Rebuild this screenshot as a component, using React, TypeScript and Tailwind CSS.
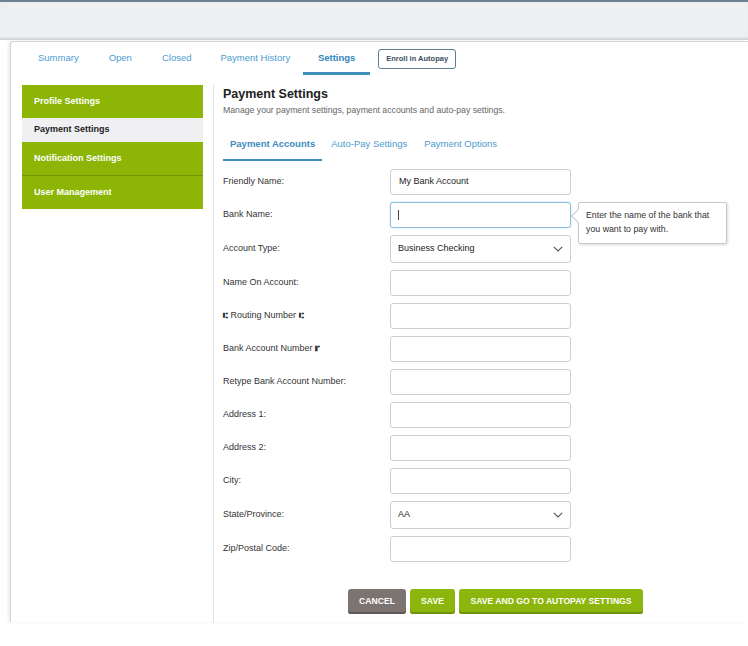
import React from "react";

const font = { fontFamily: '"Liberation Sans", Arial, sans-serif' };

const TopTab: React.FC<{ label: string; active?: boolean; className?: string }> = ({
  label,
  active,
  className,
}) => (
  <div
    className={`flex h-full items-center ${active ? "justify-center border-b-[3px] border-[#3d8dbf] pt-[2px] font-bold text-[#2f86bd]" : "text-[#4b9ccf]"} text-[9.5px] ${className ?? ""}`}
  >
    {label}
  </div>
);

const SideItem: React.FC<{ label: string; active?: boolean; className?: string }> = ({
  label,
  active,
  className,
}) => (
  <div
    className={`flex items-center pl-[12px] text-[9px] font-bold ${active ? "bg-[#f0f0f2] text-[#222]" : "bg-[#8cb505] text-white"} ${className ?? ""}`}
  >
    {label}
  </div>
);

const Chevron = () => (
  <svg width="10" height="6" viewBox="0 0 10 6" className="absolute right-[7px] top-1/2 -translate-y-1/2">
    <path d="M0.8 0.8 L5 5 L9.2 0.8" fill="none" stroke="#555" strokeWidth="1.1" />
  </svg>
);

type Row = {
  label: React.ReactNode;
  value?: string;
  select?: boolean;
  focused?: boolean;
};

const ocr = { fontFamily: '"DejaVu Sans", sans-serif' };

const ROWS: Row[] = [
  { label: "Friendly Name:", value: "My Bank Account" },
  { label: "Bank Name:", focused: true },
  { label: "Account Type:", value: "Business Checking", select: true },
  { label: "Name On Account:" },
  {
    label: (
      <>
        <span style={ocr} className="text-[8px] font-bold text-[#222]">⑆</span> Routing Number{" "}
        <span style={ocr} className="text-[8px] font-bold text-[#222]">⑆</span>
      </>
    ),
  },
  {
    label: (
      <>
        Bank Account Number <span style={ocr} className="text-[8px] font-bold text-[#222]">⑈</span>
      </>
    ),
  },
  { label: "Retype Bank Account Number:" },
  { label: "Address 1:" },
  { label: "Address 2:" },
  { label: "City:" },
  { label: "State/Province:", value: "AA", select: true },
  { label: "Zip/Postal Code:" },
];

export default function App() {
  return (
    <div className="min-h-[646px] w-[748px] overflow-hidden bg-white" style={font}>
      <div className="h-[40px] border-t-2 border-[#6c8093] bg-[#eeeff0] shadow-[inset_0_-3px_2px_-1px_#cfd3d3]" />

      <div className="relative ml-[10px] mt-[1px] h-[581px] rounded-tl-[3px] border-l border-t border-[#cfd6dc] bg-white shadow-[-2px_0_3px_rgba(0,0,0,0.08)]">
        {/* top tabs */}
        <div className="flex h-[33px] items-center pl-[27px]">
          <TopTab label="Summary" />
          <TopTab label="Open" className="ml-[30px]" />
          <TopTab label="Closed" className="ml-[30px]" />
          <TopTab label="Payment History" className="ml-[29px]" />
          <TopTab label="Settings" active className="ml-[13px] w-[67px]" />
          <div className="ml-[8px] flex h-[20px] w-[78px] items-center justify-center rounded-[3px] border border-[#5b7d94] text-[7.5px] font-bold text-[#3b4d5c]">
            Enroll in Autopay
          </div>
        </div>

        <div className="mt-[10px] flex h-[538px]">
          {/* sidebar */}
          <div className="ml-[11px] flex w-[181px] flex-col self-start">
            <SideItem label="Profile Settings" className="h-[33px]" />
            <SideItem label="Payment Settings" active className="h-[24px]" />
            <SideItem label="Notification Settings" className="h-[34px] border-b border-[#729500]" />
            <SideItem label="User Management" className="h-[33px]" />
          </div>

          {/* content */}
          <div className="ml-[10px] flex-1 border-l border-[#e3e3e3] pl-[9px] pt-[2px]">
            <div className="text-[12.5px] font-bold leading-[15px] text-[#222]">Payment Settings</div>
            <div className="mt-[3px] text-[8.7px] leading-[11px] text-[#666]">
              Manage your payment settings, payment accounts and auto-pay settings.
            </div>

            <div className="mt-[22px] flex text-[9.5px] leading-[12px]">
              <div className="border-b-2 border-[#3d8dbf] px-[7px] pb-[9px] font-bold text-[#3b8cc0]">
                Payment Accounts
              </div>
              <div className="px-[9px] text-[#4b9ccf]">Auto-Pay Settings</div>
              <div className="px-[8px] text-[#4b9ccf]">Payment Options</div>
            </div>

            <div className="mt-[8px] flex flex-col gap-[7px]">
              {ROWS.map((row, i) => (
                <div key={i} className="relative flex items-center">
                  <div className="w-[167px] text-[9px] text-[#333]">{row.label}</div>
                  <div
                    className={`relative flex w-[181px] items-center rounded-[3px] border bg-white pl-[7px] text-[9px] text-[#222] ${row.select ? "h-[28px]" : "h-[26px]"} ${row.focused ? "border-[#8fbfdf] shadow-[0_0_2px_#bcd9ec]" : "border-[#cfcfcf]"}`}
                  >
                    {row.value && <span className={row.select ? "" : "pl-[1px]"}>{row.value}</span>}
                    {row.focused && <span className="h-[10px] w-px bg-[#444]" />}
                    {row.select && <Chevron />}
                  </div>
                  {row.focused && (
                    <div className="absolute left-[355px] top-0 h-[42px] w-[149px] rounded-[2px] border border-[#c9c9c9] bg-white px-[7px] py-[5px] text-[8.8px] leading-[14px] text-[#333] shadow-[1px_1px_3px_rgba(0,0,0,0.15)]">
                      <div className="absolute left-[-6px] top-[8px] h-[10px] w-[10px] rotate-45 border-b border-l border-[#c9c9c9] bg-white" />
                      <div className="relative">Enter the name of the bank that you want to pay with.</div>
                    </div>
                  )}
                </div>
              ))}
            </div>

            <div className="ml-[125px] mt-[27px] flex gap-[4px] text-[8.6px] font-bold text-white">
              <div className="flex h-[25px] w-[58px] items-center justify-center rounded-[3px] bg-[#7c7471] shadow-[inset_0_-2px_0_#5f5855]">
                CANCEL
              </div>
              <div className="flex h-[25px] w-[45px] items-center justify-center rounded-[3px] bg-[#8cb60c] shadow-[inset_0_-2px_0_#6f9209]">
                SAVE
              </div>
              <div className="flex h-[25px] w-[184px] items-center justify-center rounded-[3px] bg-[#8cb60c] shadow-[inset_0_-2px_0_#6f9209]">
                SAVE AND GO TO AUTOPAY SETTINGS
              </div>
            </div>
          </div>
        </div>
      </div>
    </div>
  );
}
